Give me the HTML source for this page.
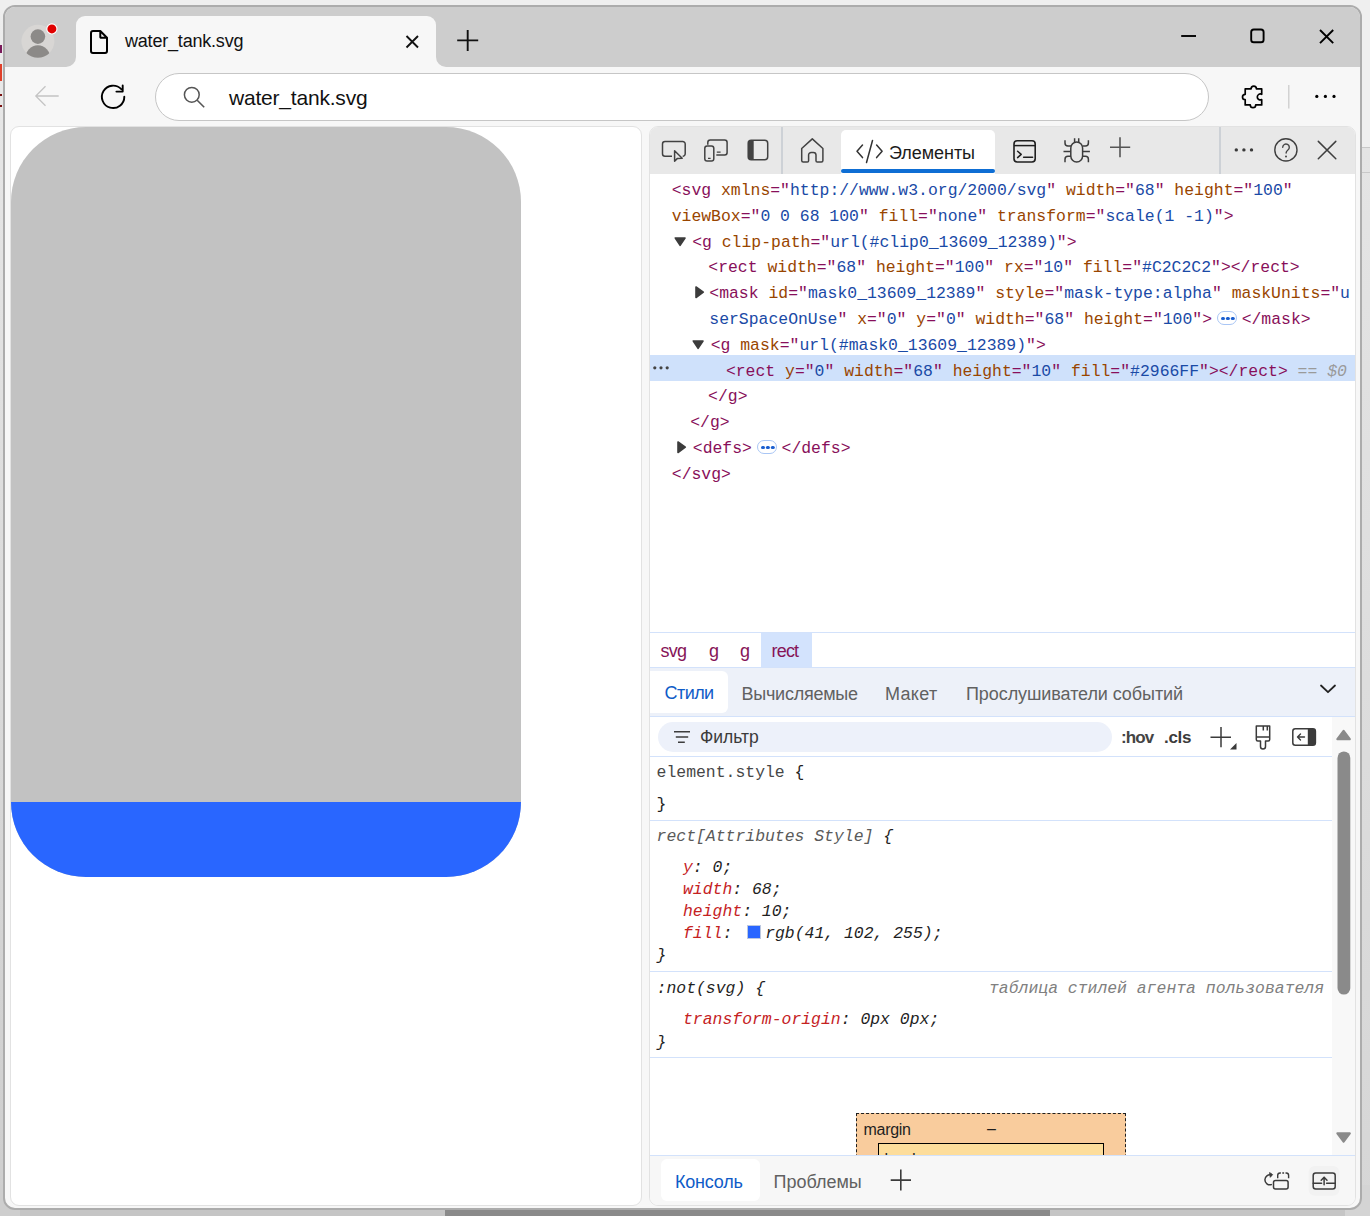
<!DOCTYPE html>
<html><head><meta charset="utf-8">
<style>
*{margin:0;padding:0;box-sizing:border-box}
html,body{width:1370px;height:1216px;overflow:hidden;background:#efefef;font-family:"Liberation Sans",sans-serif;position:relative}
.a{position:absolute}
svg{position:absolute;overflow:visible}
.mono{font-family:"Liberation Mono",monospace}
.t{white-space:pre;line-height:1}
.et{font-size:16.43px;line-height:25.8px;height:25.8px;color:#880f5a}
.tg{color:#880f5a}.an{color:#994500}.av{color:#1a4aa6}
.bc{font-size:18px;color:#861458;letter-spacing:-0.8px}
.tb{font-size:18px;color:#616161;letter-spacing:-0.8px}
.sr{font-size:16.43px;color:#1f1f1f}
.pn{color:#c5221f}
.s0{color:#9a9a9a;font-style:italic}
.el{display:inline-block;width:20.5px;height:14px;border:1px solid #a9c6f5;border-radius:7px;margin:0 4.3px 0 4.8px;vertical-align:-1px;background:#fff;position:relative}
.el:before{content:"";position:absolute;left:3.3px;top:4.6px;width:3.6px;height:3.6px;border-radius:2px;background:#1b5fd0;box-shadow:4.9px 0 0 #1b5fd0,9.8px 0 0 #1b5fd0}

</style></head><body>
<!-- ===== outside window background ===== -->
<div class="a" style="left:0;top:1209px;width:1370px;height:7px;background:#c5c5c5"></div>
<div class="a" style="left:445px;top:1209px;width:605px;height:7px;background:#8a8a8a"></div>
<div class="a" style="left:1362px;top:147px;width:8px;height:1069px;background:linear-gradient(#e4e4e4,#d6d6d6)"></div>
<div class="a" style="left:1362px;top:147px;width:8px;height:1px;background:#c8c8c8"></div>
<div class="a" style="left:1362px;top:172px;width:8px;height:1px;background:#c8c8c8"></div>
<div class="a" style="left:0;top:120px;width:3px;height:1096px;background:linear-gradient(#e6e6e6,#cecece)"></div>

<div class="a" style="left:0;top:10px;width:3px;height:110px;background:linear-gradient(#eeeeee,#e6e6e6)"></div>
<div class="a" style="left:0;top:45px;width:2px;height:8px;background:#7a1a5a"></div>
<div class="a" style="left:0;top:64px;width:2px;height:17px;background:#e0402a"></div>
<div class="a" style="left:0;top:94px;width:2px;height:2px;background:#7a1010"></div>
<div class="a" style="left:0;top:105px;width:2px;height:2px;background:#7a1010"></div>
<div class="a" style="left:0;top:1185px;width:20px;height:31px;background:#cecece"></div>
<div class="a" style="left:1345px;top:1185px;width:25px;height:31px;background:#d4d4d4"></div>
<!-- ===== window ===== -->
<div class="a" style="left:3px;top:5px;width:1359px;height:1205px;border:2px solid #acacac;border-radius:12px;background:#f7f7f7;overflow:hidden">
  <div class="a" style="left:0;top:0;width:1355px;height:60px;background:#cdcdcd"></div>
</div>

<!-- tab -->
<div class="a" style="left:76px;top:16px;width:360px;height:52px;background:#f7f7f7;border-radius:9px 9px 0 0"></div>
<svg style="left:0;top:0" width="1370" height="130">
  <!-- inverse corners of tab -->
  <path d="M66 67 A10 10 0 0 0 76 57 V67 Z" fill="#f7f7f7"/>
  <path d="M446 67 A10 10 0 0 1 436 57 V67 Z" fill="#f7f7f7"/>
  <!-- avatar -->
  <circle cx="37.9" cy="41.3" r="16.5" fill="#d8d6d4"/>
  <clipPath id="av"><circle cx="37.9" cy="41.3" r="16.5"/></clipPath>
  <circle cx="37.9" cy="36.6" r="7.3" fill="#8c8a88"/>
  <ellipse cx="37.9" cy="58.5" rx="12.6" ry="13.2" fill="#8c8a88" clip-path="url(#av)"/>
  <circle cx="51.9" cy="28.9" r="5.6" fill="#ffffff"/>
  <circle cx="51.9" cy="28.9" r="4.5" fill="#e00000"/>
  <!-- file icon -->
  <path d="M93 31 H100.3 L107 37.7 V51 a2 2 0 0 1 -2 2 H93 a2 2 0 0 1 -2 -2 V33 a2 2 0 0 1 2 -2 Z M100.3 31 V37 a0.8 0.8 0 0 0 0.8 0.8 H107" fill="none" stroke="#000" stroke-width="2" stroke-linejoin="round"/>
  <!-- tab close -->
  <path d="M406.5 36 L418 47.5 M418 36 L406.5 47.5" stroke="#111" stroke-width="1.9"/>
  <!-- new tab plus -->
  <path d="M467.7 30 V51 M457.2 40.4 H478.2" stroke="#111" stroke-width="1.9"/>
  <!-- window controls -->
  <path d="M1181.2 36 H1196" stroke="#000" stroke-width="1.9"/>
  <rect x="1251.2" y="29.5" width="12.4" height="12.8" rx="2.6" fill="none" stroke="#000" stroke-width="1.9"/>
  <path d="M1320 30 L1333.2 43.2 M1333.2 30 L1320 43.2" stroke="#000" stroke-width="1.9"/>
  <!-- back -->
  <path d="M58.7 96 H36 M45.5 86.3 L35.8 96 L45.5 105.8" fill="none" stroke="#c4c4c4" stroke-width="1.3"/>
  <!-- refresh -->
  <path d="M124.3 96.7 A11.2 11.2 0 1 1 121.3 89.2" fill="none" stroke="#000" stroke-width="1.9" stroke-linecap="round"/>
  <path d="M122.7 85.4 V91.6 H116.4" fill="none" stroke="#000" stroke-width="1.9" stroke-linecap="round" stroke-linejoin="round"/>
  <!-- puzzle -->
  <path d="M1245.2 88.8 H1251.1 A2.65 2.65 0 0 1 1256.4 88.8 H1261.7 V94.3 A3 3 0 1 0 1261.7 99.6 V104.9 H1255.7 A2.7 2.7 0 0 1 1250.3 104.9 H1245.2 V99.7 A2.7 2.7 0 0 1 1245.2 94.3 Z" fill="none" stroke="#000" stroke-width="1.7" stroke-linejoin="round"/>
  <path d="M1288.8 85 V108.6" stroke="#c8c8c8" stroke-width="1.2"/>
  <circle cx="1316.8" cy="96.4" r="1.6" fill="#000"/>
  <circle cx="1325.4" cy="96.4" r="1.6" fill="#000"/>
  <circle cx="1334" cy="96.4" r="1.6" fill="#000"/>
</svg>
<div class="a t" style="left:125px;top:32px;font-size:18px;letter-spacing:-0.2px;color:#111">water_tank.svg</div>

<!-- address bar -->
<div class="a" style="left:155px;top:73px;width:1054px;height:48px;border:1px solid #c6c6c6;border-radius:24px;background:#fff"></div>
<svg style="left:0;top:0" width="300" height="130">
  <circle cx="191.8" cy="94.8" r="7.4" fill="none" stroke="#555" stroke-width="1.5"/>
  <path d="M197.2 100.2 L204.2 107.2" stroke="#555" stroke-width="1.6"/>
</svg>
<div class="a t" style="left:229px;top:87px;font-size:21px;letter-spacing:-0.2px;color:#111">water_tank.svg</div>

<!-- ===== page panel ===== -->
<div class="a" style="left:10px;top:126px;width:632px;height:1080px;background:#fff;border:1px solid #e2e2e2;border-radius:9px;overflow:hidden">
  <svg style="left:0;top:0" width="510" height="750" viewBox="0 0 68 100">
    <rect width="68" height="100" rx="10" fill="#C2C2C2"/>
    <clipPath id="c"><rect width="68" height="100" rx="10"/></clipPath>
    <rect y="90" width="68" height="10" fill="#2966FF" clip-path="url(#c)"/>
  </svg>
</div>

<!-- ===== devtools panel ===== -->
<div class="a" style="left:649px;top:126px;width:707px;height:1080px;background:#fff;border:1px solid #e2e2e2;border-radius:9px"></div>
<!-- toolbar -->
<div class="a" style="left:650px;top:127px;width:705px;height:47px;background:#e8e8e8;border-radius:8px 8px 0 0"></div>
<div class="a" style="left:841px;top:130px;width:154px;height:44px;background:#fff;border-radius:5px 5px 0 0"></div>
<div class="a" style="left:841px;top:169px;width:154px;height:4px;background:#0e6ed4;border-radius:2px"></div>
<div class="a" style="left:781px;top:127px;width:2px;height:47px;background:#cdd1d6"></div>
<div class="a" style="left:1219px;top:127px;width:2px;height:47px;background:#cdd1d6"></div>
<svg style="left:0;top:0" width="1370" height="180">
  <!-- inspect -->
  <path d="M672 156.3 H665 a2.5 2.5 0 0 1 -2.5 -2.5 V144 a2.5 2.5 0 0 1 2.5 -2.5 H682.7 a2.5 2.5 0 0 1 2.5 2.5 V153.8 a2.5 2.5 0 0 1 -2.5 2.5" fill="none" stroke="#424242" stroke-width="1.5"/>
  <path d="M674.6 150.8 V161.2 L677.2 158.6 L682.2 158.2 Z" fill="none" stroke="#424242" stroke-width="1.5" stroke-linejoin="round"/>
  <!-- device -->
  <path d="M707.8 144.8 V142.5 a2.5 2.5 0 0 1 2.5 -2.5 H724.6 a2.5 2.5 0 0 1 2.5 2.5 V152.4 a2.5 2.5 0 0 1 -2.5 2.5 H716.3" fill="none" stroke="#424242" stroke-width="1.5"/>
  <rect x="704.8" y="146" width="9" height="15" rx="2.3" fill="none" stroke="#424242" stroke-width="1.5"/>
  <path d="M708 158.3 H710.6 M716.8 152.1 H720.6" stroke="#424242" stroke-width="1.3"/>
  <!-- dock -->
  <rect x="748.2" y="140.2" width="19.5" height="19.5" rx="3" fill="none" stroke="#424242" stroke-width="1.5"/>
  <path d="M748.2 143.2 a3 3 0 0 1 3 -3 H753.7 V159.7 H751.2 a3 3 0 0 1 -3 -3 Z" fill="#424242"/>
  <!-- home -->
  <path d="M801.7 148.5 L812.3 138.9 L822.9 148.5 V160.5 a1.5 1.5 0 0 1 -1.5 1.5 H817.3 a1.3 1.3 0 0 1 -1.3 -1.3 V155 a2.6 2.6 0 0 0 -2.6 -2.6 H811.2 a2.6 2.6 0 0 0 -2.6 2.6 V160.7 a1.3 1.3 0 0 1 -1.3 1.3 H803.2 a1.5 1.5 0 0 1 -1.5 -1.5 Z" fill="none" stroke="#424242" stroke-width="1.5" stroke-linejoin="round"/>
  <!-- code -->
  <path d="M862.5 145 L857 151.3 L862.5 157.6 M876.6 145 L882.1 151.3 L876.6 157.6 M872.5 140.5 L866.5 162.5" fill="none" stroke="#333" stroke-width="1.5" stroke-linecap="round" stroke-linejoin="round"/>
  <!-- console -->
  <rect x="1014" y="140.8" width="21.2" height="21.2" rx="3.2" fill="none" stroke="#1f1f1f" stroke-width="1.6"/>
  <path d="M1014 145.6 H1035.2" stroke="#1f1f1f" stroke-width="1.5"/>
  <path d="M1017.6 151.2 L1021.2 154.4 L1017.6 157.6 M1023.6 157.3 H1032.6" fill="none" stroke="#1f1f1f" stroke-width="1.5" stroke-linecap="round" stroke-linejoin="round"/>
  <!-- bug -->
  <rect x="1070.8" y="142" width="11.8" height="20" rx="5.9" fill="none" stroke="#3c3c3c" stroke-width="1.5"/>
  <path d="M1074.6 138.2 V142 M1078.7 138.2 V142 M1065 140.2 V143 a3 3 0 0 0 3 3 H1071 M1088.4 140.2 V143 a3 3 0 0 1 -3 3 H1082.5 M1063.5 151.6 H1070.8 M1082.6 151.6 H1089.9 M1065 162.3 V159.3 a3 3 0 0 1 3 -3 H1071 M1088.4 162.3 V159.3 a3 3 0 0 0 -3 -3 H1082.5" fill="none" stroke="#3c3c3c" stroke-width="1.5"/>
  <!-- plus -->
  <path d="M1120 137.2 V157.2 M1110 147.2 H1130.2" stroke="#555" stroke-width="1.6"/>
  <!-- more -->
  <circle cx="1236.3" cy="149.9" r="1.7" fill="#3a3a3a"/>
  <circle cx="1243.9" cy="149.9" r="1.7" fill="#3a3a3a"/>
  <circle cx="1251.5" cy="149.9" r="1.7" fill="#3a3a3a"/>
  <!-- help -->
  <circle cx="1285.9" cy="149.9" r="11.1" fill="none" stroke="#3f3f3f" stroke-width="1.4"/>
  <path d="M1282.7 147.3 a3.3 3.3 0 1 1 5.2 2.7 c-1.1 0.8 -1.8 1.5 -1.8 3" fill="none" stroke="#444" stroke-width="1.4" stroke-linecap="round"/>
  <circle cx="1286" cy="156.4" r="1" fill="#444"/>
  <!-- close -->
  <path d="M1318.3 141.4 L1335.8 158.7 M1335.8 141.4 L1318.3 158.7" stroke="#3f3f3f" stroke-width="1.5" stroke-linecap="round"/>
</svg>
<div class="a t" style="left:889px;top:143.5px;font-size:18px;color:#1b1b1b;letter-spacing:-0.05px">Элементы</div>
<!-- elements tree -->
<div class="a" style="left:650px;top:354.8px;width:705px;height:25.8px;background:#cfe1fb"></div>
<div class="a t mono et" style="left:671.7px;top:178.0px"><span class="tg">&lt;svg</span> <span class="an">xmlns</span><span class="tg">="</span><span class="av">http://www.w3.org/2000/svg</span><span class="tg">"</span> <span class="an">width</span><span class="tg">="</span><span class="av">68</span><span class="tg">"</span> <span class="an">height</span><span class="tg">="</span><span class="av">100</span><span class="tg">"</span></div>
<div class="a t mono et" style="left:671.7px;top:203.8px"><span class="an">viewBox</span><span class="tg">="</span><span class="av">0 0 68 100</span><span class="tg">"</span> <span class="an">fill</span><span class="tg">="</span><span class="av">none</span><span class="tg">"</span> <span class="an">transform</span><span class="tg">="</span><span class="av">scale(1 -1)</span><span class="tg">"</span><span class="tg">&gt;</span></div>
<div class="a t mono et" style="left:692.2px;top:229.6px"><span class="tg">&lt;g</span> <span class="an">clip-path</span><span class="tg">="</span><span class="av">url(#clip0_13609_12389)</span><span class="tg">"</span><span class="tg">&gt;</span></div>
<div class="a t mono et" style="left:708.3px;top:255.4px"><span class="tg">&lt;rect</span> <span class="an">width</span><span class="tg">="</span><span class="av">68</span><span class="tg">"</span> <span class="an">height</span><span class="tg">="</span><span class="av">100</span><span class="tg">"</span> <span class="an">rx</span><span class="tg">="</span><span class="av">10</span><span class="tg">"</span> <span class="an">fill</span><span class="tg">="</span><span class="av">#C2C2C2</span><span class="tg">"</span><span class="tg">&gt;&lt;/rect&gt;</span></div>
<div class="a t mono et" style="left:709.3px;top:281.2px"><span class="tg">&lt;mask</span> <span class="an">id</span><span class="tg">="</span><span class="av">mask0_13609_12389</span><span class="tg">"</span> <span class="an">style</span><span class="tg">="</span><span class="av">mask-type:alpha</span><span class="tg">"</span> <span class="an">maskUnits</span><span class="tg">="</span><span class="av">u</span></div>
<div class="a t mono et" style="left:709.3px;top:307.0px"><span class="av">serSpaceOnUse</span><span class="tg">"</span> <span class="an">x</span><span class="tg">="</span><span class="av">0</span><span class="tg">"</span> <span class="an">y</span><span class="tg">="</span><span class="av">0</span><span class="tg">"</span> <span class="an">width</span><span class="tg">="</span><span class="av">68</span><span class="tg">"</span> <span class="an">height</span><span class="tg">="</span><span class="av">100</span><span class="tg">"</span><span class="tg">&gt;</span><span class="el"></span><span class="tg">&lt;/mask&gt;</span></div>
<div class="a t mono et" style="left:710.7px;top:332.8px"><span class="tg">&lt;g</span> <span class="an">mask</span><span class="tg">="</span><span class="av">url(#mask0_13609_12389)</span><span class="tg">"</span><span class="tg">&gt;</span></div>
<div class="a t mono et" style="left:725.9px;top:358.6px"><span class="tg">&lt;rect</span> <span class="an">y</span><span class="tg">="</span><span class="av">0</span><span class="tg">"</span> <span class="an">width</span><span class="tg">="</span><span class="av">68</span><span class="tg">"</span> <span class="an">height</span><span class="tg">="</span><span class="av">10</span><span class="tg">"</span> <span class="an">fill</span><span class="tg">="</span><span class="av">#2966FF</span><span class="tg">"</span><span class="tg">&gt;&lt;/rect&gt;</span> <span class="s0">== $0</span></div>
<div class="a t mono et" style="left:708.1px;top:384.4px"><span class="tg">&lt;/g&gt;</span></div>
<div class="a t mono et" style="left:690.2px;top:410.2px"><span class="tg">&lt;/g&gt;</span></div>
<div class="a t mono et" style="left:692.8px;top:436.0px"><span class="tg">&lt;defs&gt;</span><span class="el"></span><span class="tg">&lt;/defs&gt;</span></div>
<div class="a t mono et" style="left:671.8px;top:461.8px"><span class="tg">&lt;/svg&gt;</span></div>
<svg style="left:0;top:0" width="1370" height="500">
  <path d="M675.3 238 H685 L680.1 245.3 Z" fill="#3c3c3c" stroke="#3c3c3c" stroke-width="1.6" stroke-linejoin="round"/>
  <path d="M696 287 V297.5 L703.3 292.2 Z" fill="#3c3c3c" stroke="#3c3c3c" stroke-width="1.6" stroke-linejoin="round"/>
  <path d="M693.3 341 H703 L698.1 348.3 Z" fill="#3c3c3c" stroke="#3c3c3c" stroke-width="1.6" stroke-linejoin="round"/>
  <path d="M678 442 V452.5 L685.3 447.2 Z" fill="#3c3c3c" stroke="#3c3c3c" stroke-width="1.6" stroke-linejoin="round"/>
  <circle cx="654.8" cy="367.8" r="1.6" fill="#444"/><circle cx="661" cy="367.8" r="1.6" fill="#444"/><circle cx="667.2" cy="367.8" r="1.6" fill="#444"/>
</svg>
<!-- breadcrumbs -->
<div class="a" style="left:650px;top:632px;width:705px;height:1px;background:#d3e2fb"></div>
<div class="a" style="left:761px;top:633px;width:51px;height:34px;background:#d3e3fd"></div>
<div class="a t bc" style="left:660.5px;top:642px">svg</div>
<div class="a t bc" style="left:709px;top:642px">g</div>
<div class="a t bc" style="left:740px;top:642px">g</div>
<div class="a t bc" style="left:771.5px;top:642px">rect</div>
<!-- styles tabs -->
<div class="a" style="left:650px;top:667px;width:705px;height:50px;background:#edf1f9;border-top:1px solid #d3e2fb;border-bottom:1px solid #d3e2fb"></div>
<div class="a" style="left:650px;top:671px;width:78px;height:42px;background:#fff;border-radius:0 6px 6px 0"></div>
<div class="a t tb" style="left:664.5px;top:684px;color:#0f5cc8;letter-spacing:-0.55px">Стили</div>
<div class="a t tb" style="left:741.5px;top:684.5px;letter-spacing:-0.25px">Вычисляемые</div>
<div class="a t tb" style="left:885px;top:684.5px;letter-spacing:0.3px">Макет</div>
<div class="a t tb" style="left:966px;top:684.5px;letter-spacing:-0.08px">Прослушиватели событий</div>
<svg style="left:0;top:0" width="1370" height="1216">
  <path d="M1321 685.5 L1328 692.2 L1335 685.5" fill="none" stroke="#222" stroke-width="1.8" stroke-linecap="round" stroke-linejoin="round"/>
</svg>
<!-- filter row -->
<div class="a" style="left:658px;top:722px;width:454px;height:30px;background:#edf1fa;border-radius:15px"></div>
<div class="a" style="left:650px;top:756px;width:682px;height:1px;background:#d3e2fb"></div>
<div class="a" style="left:1332px;top:717px;width:23px;height:438px;background:#f8f8f8"></div>
<div class="a t" style="left:700px;top:729px;font-size:17.5px;color:#3b3b3b;letter-spacing:0px">Фильтр</div>
<div class="a t" style="left:1121px;top:729px;font-size:17px;font-weight:bold;color:#444;letter-spacing:-0.9px">:hov</div>
<div class="a t" style="left:1164px;top:729px;font-size:17px;font-weight:bold;color:#3b3b3b;letter-spacing:-0.3px">.cls</div>
<svg style="left:0;top:0" width="1370" height="1216">
  <path d="M674 731.7 H690 M675.8 736.9 H688.2 M678 742.2 H684.8" stroke="#3d3d3d" stroke-width="1.5"/>
  <path d="M1221 727 V747.2 M1210.5 737.2 H1231" stroke="#3b3b3b" stroke-width="1.5"/>
  <path d="M1236.5 743 V749.5 H1230 Z" fill="#3b3b3b"/>
  <path d="M1256.3 726 H1269.7 V739.5 a1.5 1.5 0 0 1 -1.5 1.5 H1265.5 V746.5 a2.5 2.5 0 0 1 -5 0 V741 H1257.8 a1.5 1.5 0 0 1 -1.5 -1.5 Z M1256.3 737 H1269.7 M1263.3 726 V730.5 M1267.3 726 V730.5" fill="none" stroke="#3b3b3b" stroke-width="1.5" stroke-linejoin="round"/>
  <rect x="1292.8" y="728.8" width="22.6" height="16.4" rx="2.5" fill="none" stroke="#3b3b3b" stroke-width="1.5"/>
  <path d="M1307.8 728.8 H1312.9 a2.5 2.5 0 0 1 2.5 2.5 V742.7 a2.5 2.5 0 0 1 -2.5 2.5 H1307.8 Z" fill="#3b3b3b"/>
  <path d="M1304.5 737 H1297.5 M1300.5 734 L1297.5 737 L1300.5 740" fill="none" stroke="#3b3b3b" stroke-width="1.4" stroke-linecap="round" stroke-linejoin="round"/>
  <!-- scrollbar -->
  <path d="M1343.6 730.8 L1349.8 739.2 H1337.4 Z" fill="#8a8a8a" stroke="#8a8a8a" stroke-width="2.2" stroke-linejoin="round"/>
  <path d="M1343.6 1141.7 L1349.8 1133.3 H1337.4 Z" fill="#8a8a8a" stroke="#8a8a8a" stroke-width="2.2" stroke-linejoin="round"/>
  <rect x="1337.5" y="751.5" width="12.8" height="243" rx="6.4" fill="#8a8a8a"/>
</svg>
<!-- styles rules -->
<div class="a" style="left:650px;top:820px;width:682px;height:1px;background:#d3e2fb"></div>
<div class="a" style="left:650px;top:971px;width:682px;height:1px;background:#d3e2fb"></div>
<div class="a" style="left:650px;top:1057px;width:682px;height:1px;background:#d3e2fb"></div>
<div class="a t mono sr" style="left:656.6px;top:765px"><span style="color:#474747">element.style</span> {</div>
<div class="a t mono sr" style="left:656.6px;top:797px">}</div>
<div class="a t mono sr" style="left:656.6px;top:829px;font-style:italic"><span style="color:#5a5a5a">rect[Attributes Style]</span> {</div>
<div class="a t mono sr" style="left:683px;top:860px;font-style:italic"><span class="pn">y</span>: 0;</div>
<div class="a t mono sr" style="left:683px;top:882px;font-style:italic"><span class="pn">width</span>: 68;</div>
<div class="a t mono sr" style="left:683px;top:904px;font-style:italic"><span class="pn">height</span>: 10;</div>
<div class="a t mono sr" style="left:683px;top:926px;font-style:italic"><span class="pn">fill</span>: <span style="display:inline-block;width:23px"></span>rgb(41, 102, 255);</div>
<div class="a" style="left:747px;top:925px;width:14px;height:14px;background:#2966ff;border:1px solid #bcc8e0"></div>
<div class="a t mono sr" style="left:656.6px;top:948px;font-style:italic">}</div>
<div class="a t mono sr" style="left:656.6px;top:981px;font-style:italic">:not(svg) {</div>
<div class="a t mono sr" style="left:989px;top:981px;font-style:italic;color:#808080">таблица стилей агента пользователя</div>
<div class="a t mono sr" style="left:683px;top:1012px;font-style:italic"><span class="pn">transform-origin</span>: 0px 0px;</div>
<div class="a t mono sr" style="left:656.6px;top:1035px;font-style:italic">}</div>
<!-- box model -->
<div class="a" style="left:856px;top:1113px;width:270px;height:60px;background:#f9cc9d;border:1px dashed #1f1f1f;border-bottom:none"></div>
<div class="a t" style="left:863.5px;top:1122px;font-size:16px;color:#1f1f1f;letter-spacing:-0.3px">margin</div>
<div class="a t" style="left:987px;top:1121px;font-size:16px;color:#1f1f1f">–</div>
<div class="a" style="left:878px;top:1143px;width:226px;height:30px;background:#fddd9b;border:1px solid #000;border-bottom:none"></div>
<div class="a t" style="left:884.5px;top:1152px;font-size:16px;color:#1f1f1f;letter-spacing:-0.3px">border</div>
<!-- drawer -->
<div class="a" style="left:650px;top:1155px;width:705px;height:50px;background:#f7f7f7;border-top:1px solid #d3e2fb;border-radius:0 0 8px 8px"></div>
<div class="a" style="left:661px;top:1159px;width:99px;height:42px;background:#fff;border-radius:6px"></div>
<div class="a t tb" style="left:675px;top:1172.5px;color:#0f5cc8;letter-spacing:-0.2px">Консоль</div>
<div class="a t tb" style="left:773.5px;top:1172.5px;letter-spacing:0px">Проблемы</div>
<svg style="left:0;top:0" width="1370" height="1216">
  <path d="M900.8 1169.6 V1190.6 M890.7 1180.1 H911" stroke="#3b3b3b" stroke-width="1.6"/>
  <!-- undock-ish icon -->
  <rect x="1308.7" y="1166" width="30.6" height="29.7" rx="6" fill="#f2f2f2"/>
  <path d="M1271.3 1175 A5 5 0 1 0 1271.3 1184.6" fill="none" stroke="#3b3b3b" stroke-width="1.5" stroke-linecap="round"/>
  <path d="M1269.6 1172.6 L1272.6 1174.6 L1270.3 1177.3 Z" fill="#3b3b3b" stroke="#3b3b3b" stroke-width="0.9" stroke-linejoin="round"/>
  <path d="M1277.7 1178.3 V1175.3 A2.3 2.3 0 0 1 1280 1173 H1280.9 M1282.3 1173 H1284.1 M1285.5 1173 H1286.3 A2.3 2.3 0 0 1 1288.6 1175.3 V1178.3" fill="none" stroke="#3b3b3b" stroke-width="1.4"/>
  <rect x="1273.5" y="1180.5" width="14.6" height="8.6" rx="2" fill="none" stroke="#3b3b3b" stroke-width="1.5"/>
  <rect x="1313.2" y="1172.9" width="22" height="16" rx="2.5" fill="none" stroke="#3b3b3b" stroke-width="1.5"/>
  <path d="M1313.2 1183.2 H1321.6 M1326.6 1183.2 H1335.2 M1324.1 1184.8 V1177.3 M1321.2 1180.3 L1324.1 1177.2 L1327 1180.3" fill="none" stroke="#3b3b3b" stroke-width="1.5" stroke-linejoin="round" stroke-linecap="round"/>
</svg>
</body></html>
